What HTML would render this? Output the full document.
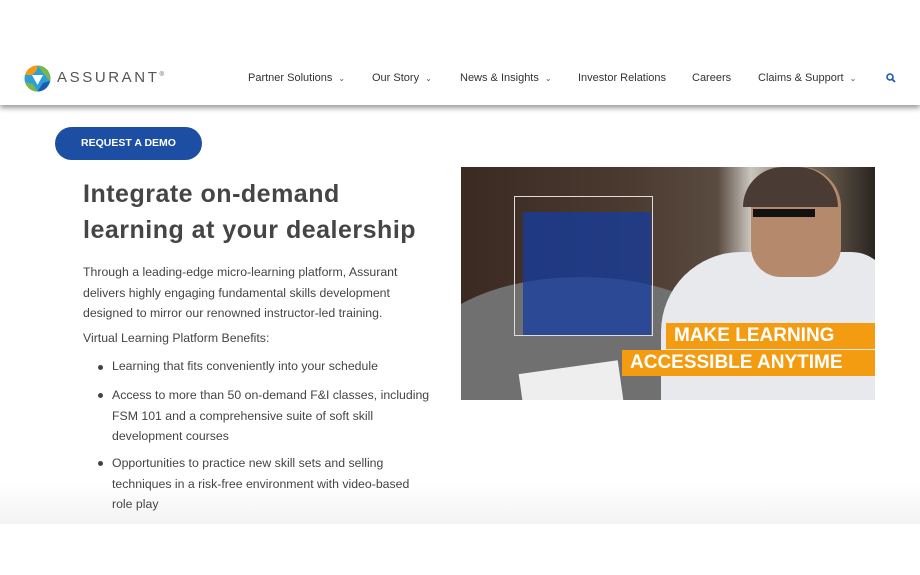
<!DOCTYPE html>
<html><head><meta charset="utf-8"><style>
*{margin:0;padding:0;box-sizing:border-box}
body{width:920px;height:575px;background:#fff;font-family:"Liberation Sans",sans-serif;position:relative;overflow:hidden;color:#444}
.hdr{position:absolute;left:0;top:0;width:920px;height:105px;background:#fff;box-shadow:0 3px 5px rgba(0,0,0,.4);z-index:2}
.fade{position:absolute;left:0;top:105px;width:920px;height:419px;background:linear-gradient(#fff 0,#fff 90%,#f3f3f3 100%)}
.logo{position:absolute;left:24px;top:65px}
.brand{position:absolute;left:57px;top:69px;font-size:15px;letter-spacing:2.6px;color:#555}
.nav{position:absolute;top:72px;font-size:11px;color:#333}
.car{color:#1e5ab4;font-size:8px;margin-left:6px}
.btn{position:absolute;left:55px;top:127px;width:147px;height:33px;border-radius:17px;background:#1c4fa3;color:#fff;font-weight:bold;font-size:10.5px;text-align:center;line-height:33px}
h1{position:absolute;left:83px;top:176px;font-size:25px;line-height:36px;font-weight:bold;color:#454545;letter-spacing:.5px}
.t{position:absolute;font-size:12.3px;color:#444}
.dot{position:absolute;left:98px;width:5px;height:5px;border-radius:50%;background:#444}
.img{position:absolute;left:461px;top:167px;width:414px;height:233px;overflow:hidden;background:#3a2e26}
.lbl{position:absolute;background:#f39c12;color:#fff;font-size:19px;font-weight:bold;white-space:nowrap;padding-left:8px;line-height:26px}
</style></head><body>
<div class="fade"></div>
<div class="hdr">
<svg class="logo" width="27" height="27" viewBox="0 0 27 27"><circle cx="13.5" cy="13.5" r="13" fill="#2a9fd8"/><path d="M13.5 .5A13 13 0 0 0 1 10L8 10 13 5Z" fill="#f39c12"/><path d="M26 10A13 13 0 0 0 13.5 .5L19 8 26 16Z" fill="#7ab648"/><path d="M1 17A13 13 0 0 0 13.5 26.5L9 19Z" fill="#7ab648"/><path d="M8 10L19 10 13.5 20Z" fill="#fff"/><path d="M26 16A13 13 0 0 1 13.5 26.5L19 18Z" fill="#1e5ab4"/></svg>
<div class="brand">ASSURANT<sup style="font-size:6px">®</sup></div>
<div class="nav" style="left:248px">Partner Solutions<span class="car">⌄</span></div>
<div class="nav" style="left:372px">Our Story<span class="car">⌄</span></div>
<div class="nav" style="left:460px">News &amp; Insights<span class="car">⌄</span></div>
<div class="nav" style="left:578px">Investor Relations</div>
<div class="nav" style="left:692px">Careers</div>
<div class="nav" style="left:758px">Claims &amp; Support<span class="car">⌄</span></div>
<svg style="position:absolute;left:886px;top:73px" width="10" height="10" viewBox="0 0 10 10"><circle cx="4" cy="4" r="3" fill="none" stroke="#1e5ab4" stroke-width="1.6"/><path d="M6.2 6.2L9 9" stroke="#1e5ab4" stroke-width="1.8"/></svg>
</div>
<div class="btn">REQUEST A DEMO</div>
<h1>Integrate on-demand<br>learning at your dealership</h1>
<div class="t" style="left:83px;top:262px;line-height:20.7px">Through a leading-edge micro-learning platform, Assurant<br>delivers highly engaging fundamental skills development<br>designed to mirror our renowned instructor-led training.</div>
<div class="t" style="left:83px;top:331px">Virtual Learning Platform Benefits:</div>
<div class="dot" style="top:365px"></div>
<div class="t" style="left:112px;top:359px">Learning that fits conveniently into your schedule</div>
<div class="dot" style="top:393px"></div>
<div class="t" style="left:112px;top:385px;line-height:20.7px">Access to more than 50 on-demand F&amp;I classes, including<br>FSM 101 and a comprehensive suite of soft skill<br>development courses</div>
<div class="dot" style="top:461px"></div>
<div class="t" style="left:112px;top:453px;line-height:20.7px">Opportunities to practice new skill sets and selling<br>techniques in a risk-free environment with video-based<br>role play</div>
<div class="img">
<div style="position:absolute;left:0;top:0;width:414px;height:233px;background:linear-gradient(90deg,#3b2a22 0,#4a3a30 40%,#5a4b40 62%,#c9c6bf 70%,#8a7a66 80%,#2a2420 100%)"></div>
<div style="position:absolute;left:-40px;top:110px;width:320px;height:160px;border-radius:50%;background:#707070"></div>
<div style="position:absolute;left:300px;top:100px;width:150px;height:90px;border-radius:30px;background:#c8903c"></div>
<div style="position:absolute;left:200px;top:85px;width:230px;height:160px;border-radius:80px 40px 0 0;background:#e8e9ec"></div>
<div style="position:absolute;left:290px;top:0;width:90px;height:110px;background:#b58a6c;border-radius:40px 40px 30px 30px"></div>
<div style="position:absolute;left:282px;top:0;width:95px;height:40px;background:#4a3c34;border-radius:40px 40px 0 0"></div>
<div style="position:absolute;left:292px;top:42px;width:62px;height:8px;background:#111"></div>
<div style="position:absolute;left:60px;top:200px;width:100px;height:40px;background:#eee;transform:rotate(-8deg)"></div>
<div style="position:absolute;left:62px;top:45px;width:128px;height:124px;background:rgba(20,60,160,.75)"></div>
<div style="position:absolute;left:53px;top:29px;width:139px;height:140px;border:1.5px solid #ddd"></div>
<div class="lbl" style="left:205px;top:156px;width:209px">MAKE LEARNING</div>
<div class="lbl" style="left:161px;top:183px;width:253px">ACCESSIBLE ANYTIME</div>
</div>
</body></html>
